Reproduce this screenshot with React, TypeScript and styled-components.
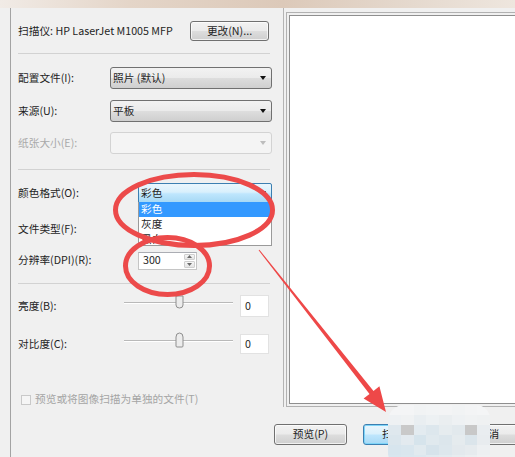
import React from "react";
import styled, { createGlobalStyle, css } from "styled-components";

const GlobalStyle = createGlobalStyle`
  html, body { margin: 0; padding: 0; }
  body {
    width: 515px;
    height: 457px;
    overflow: hidden;
    background: #f0f0f0;
    font-family: "Noto Sans CJK SC", "Noto Sans", sans-serif;
    font-size: 10.7px;
    color: #1e1e1e;
  }
`;

const Window = styled.div`
  position: relative;
  width: 515px;
  height: 457px;
  overflow: hidden;
  display: flex;
  flex-direction: column;
`;

const TitleStrip = styled.div`
  height: 8px;
  flex: none;
  background: linear-gradient(90deg, #f1ebe6 0%, #e4d5c8 25%, #dcc9b9 55%, #e5d9ce 80%, #eee6de 100%);
`;

const Frame = styled.div`
  flex: 1;
  margin-left: 10px;
  border-left: 1px solid #a3a3a3;
  display: flex;
  flex-direction: column;
  min-height: 0;
`;

const TopArea = styled.div`
  height: 399px;
  flex: none;
  display: flex;
`;

const LeftPanel = styled.div`
  width: 272px;
  flex: none;
  box-sizing: border-box;
  padding: 0 11px 0 7px;
  display: flex;
  flex-direction: column;
`;

const Row = styled.div<{ $mt: number; $h: number }>`
  display: flex;
  align-items: center;
  margin-top: ${(p) => p.$mt}px;
  height: ${(p) => p.$h}px;
  flex: none;
  line-height: 1;
  white-space: nowrap;
`;

const Label = styled.span<{ $disabled?: boolean }>`
  width: 92px;
  flex: none;
  color: ${(p) => (p.$disabled ? "#a9a9a9" : "#1e1e1e")};
`;

const ScannerName = styled.span`
  flex: 1;
`;

const Separator = styled.div<{ $mt: number }>`
  margin-top: ${(p) => p.$mt}px;
  height: 1px;
  flex: none;
  background: #d2d2d2;
  margin-right: 2px;
`;

const buttonLook = css`
  box-sizing: border-box;
  border: 1px solid #707070;
  border-radius: 3px;
  background: linear-gradient(#f2f2f2 0%, #ebebeb 48%, #dddddd 52%, #cfcfcf 100%);
  box-shadow: inset 0 0 0 1px rgba(255, 255, 255, 0.7);
  display: flex;
  align-items: center;
  justify-content: center;
  color: #1e1e1e;
  line-height: 1;
`;

const PushButton = styled.div<{ $w: number; $default?: boolean }>`
  ${buttonLook}
  width: ${(p) => p.$w}px;
  height: 100%;
  flex: none;
  ${(p) =>
    p.$default &&
    css`
      border-color: #3c7fb1;
      background: linear-gradient(#eaf6fd 0%, #d9f0fc 48%, #bee6fd 52%, #a7d9f5 100%);
      box-shadow: inset 0 0 0 1px #7fd5f8;
    `}
`;

const Combo = styled.div<{ $variant?: "normal" | "disabled" | "open"; $indent?: number }>`
  position: relative;
  flex: 1;
  height: 100%;
  box-sizing: border-box;
  margin-left: ${(p) => p.$indent ?? 0}px;
  border: 1px solid #707070;
  border-radius: 3px;
  background: linear-gradient(#f2f2f2 0%, #ebebeb 48%, #dddddd 52%, #cfcfcf 100%);
  display: flex;
  align-items: center;
  padding-left: 2px;
  ${(p) =>
    p.$variant === "disabled" &&
    css`
      border-color: #d3d3d3;
      background: #f4f4f4;
    `}
  ${(p) =>
    p.$variant === "open" &&
    css`
      border-color: #3c7fb1;
      border-radius: 2px 2px 0 0;
      background: linear-gradient(#eaf6fd 0%, #d9f0fc 45%, #bee6fd 55%, #a7d9f5 100%);
    `}
`;

const ComboArrow = styled.span<{ $disabled?: boolean }>`
  margin-left: auto;
  margin-right: 5px;
  width: 0;
  height: 0;
  border-left: 3.5px solid transparent;
  border-right: 3.5px solid transparent;
  border-top: 4px solid ${(p) => (p.$disabled ? "#bdbdbd" : "#111")};
`;

const DropList = styled.div`
  position: absolute;
  top: 100%;
  left: -1px;
  right: -1px;
  height: 44px;
  box-sizing: border-box;
  border: 1px solid #9a9a9a;
  border-top: none;
  background: #fff;
  overflow: hidden;
  z-index: 2;
`;

const DropItem = styled.div<{ $selected?: boolean }>`
  height: 15px;
  display: flex;
  align-items: center;
  padding-left: 2px;
  background: ${(p) => (p.$selected ? "#3399ff" : "transparent")};
  color: ${(p) => (p.$selected ? "#fff" : "#1e1e1e")};
`;

const SpinBox = styled.div`
  margin-left: 28px;
  width: 59px;
  height: 18px;
  box-sizing: border-box;
  border: 1px solid #c5c5c5;
  border-top-color: #abadb3;
  background: #fff;
  display: flex;
  align-items: stretch;
`;

const SpinValue = styled.span`
  flex: 1;
  display: flex;
  align-items: center;
  padding-left: 4px;
`;

const SpinButtons = styled.div`
  width: 11px;
  display: flex;
  flex-direction: column;
  gap: 1px;
  padding: 1px 1px 1px 0;
`;

const SpinHalf = styled.div`
  flex: 1;
  border: 1px solid #cfcfcf;
  border-radius: 1px;
  background: linear-gradient(#f6f6f6, #e4e4e4);
  display: flex;
  align-items: center;
  justify-content: center;
`;

const Slider = styled.div<{ $offset: number }>`
  position: relative;
  margin-left: 14px;
  width: 109px;
  height: 16px;
  align-self: flex-start;
  margin-top: ${(p) => p.$offset}px;
`;

const Track = styled.div`
  position: absolute;
  left: 0;
  right: 0;
  top: 7px;
  height: 1px;
  background: #b9b9b9;
  border-bottom: 1px solid #ffffff;
`;

const Thumb = styled.svg`
  position: absolute;
  top: 0;
`;

const ValueBox = styled.div`
  margin-left: 7px;
  width: 29px;
  height: 100%;
  box-sizing: border-box;
  border: 1px solid #e2e2e2;
  background: #fff;
  display: flex;
  align-items: center;
  padding-left: 4px;
`;

const CheckBox = styled.span`
  margin-left: 3px;
  width: 10px;
  height: 10px;
  box-sizing: border-box;
  border: 1px solid #c9c9c9;
  background: #f5f5f5;
  flex: none;
`;

const CheckLabel = styled.span`
  margin-left: 4px;
  color: #a5a5a5;
`;

const RightPanel = styled.div`
  flex: 1;
  display: flex;
  flex-direction: column;
  border-left: 1px solid #b4b4b4;
  padding-top: 4px;
  min-width: 0;
`;

const PreviewOuter = styled.div`
  margin-left: 2px;
  flex: 1;
  box-sizing: border-box;
  border: 1px solid #b1b1b1;
  border-right: none;
  padding: 2px 0 2px 2px;
`;

const PreviewInner = styled.div`
  height: 100%;
  box-sizing: border-box;
  border: 1px solid #8f8f8f;
  border-right: none;
  background: #fff;
`;

const ButtonRow = styled.div`
  margin-top: 17px;
  height: 21px;
  flex: none;
  display: flex;
  gap: 16px;
  padding-left: 263px;
`;

const Overlay = styled.svg`
  position: absolute;
  left: 0;
  top: 0;
  pointer-events: none;
  z-index: 5;
`;

const Blur = styled.div`
  position: absolute;
  left: 388px;
  top: 405px;
  width: 102px;
  height: 60px;
  border-radius: 16px 14px 0 12px;
  overflow: hidden;
  display: grid;
  grid-template-columns: repeat(8, 1fr);
  grid-template-rows: repeat(6, 1fr);
  z-index: 6;
`;

const BlurCell = styled.div<{ $c: string }>`
  background: ${(p) => p.$c};
`;

const blurColors = [
  "#f4f5f6", "#f4f5f6", "#f1f3f4", "#f2f4f5", "#f3f4f5", "#f1f3f4", "#f3f4f5", "#f4f5f6",
  "#eef1f3", "#f0f2f3", "#e9eef1", "#edf1f3", "#eaeef0", "#eef1f3", "#f0f2f3", "#eff1f2",
  "#dfe8ee", "#c9c9c9", "#e3ebf0", "#dde7ed", "#e6ecef", "#e2e9ed", "#c8c8c8", "#e9edf0",
  "#dbe6ed", "#e3eaef", "#d6e4ec", "#e0e9ee", "#dce6ec", "#e5ebee", "#dbe5eb", "#e8ecef",
  "#d7e5ee", "#d9e6ee", "#e1eaef", "#d6e3eb", "#dde7ed", "#e3e9ed", "#e6ebee", "#edf0f2",
  "#d8e6ef", "#dae7ef", "#dce8ef", "#e0eaf0", "#e2ebf0", "#e7edf0", "#ebeff1", "#eff1f3",
];

const BrightThumb = () => (
  <Thumb width="9" height="14" viewBox="0 0 9 14" style={{ left: 51 }}>
    <path d="M1 1 H8 V10 Q8 13 4.5 13 Q1 13 1 10 Z" fill="#ececec" stroke="#8e8e8e" />
  </Thumb>
);

const ContrastThumb = () => (
  <Thumb width="9" height="16" viewBox="0 0 9 16" style={{ left: 51, top: -1 }}>
    <path d="M1 5 Q1 1 4.5 1 Q8 1 8 5 V14 Q8 15 7 15 H2 Q1 15 1 14 Z" fill="#ececec" stroke="#8e8e8e" />
  </Thumb>
);

const SpinArrow = ({ up }: { up?: boolean }) => (
  <svg width="5" height="3" viewBox="0 0 5 3">
    <path d={up ? "M0 3 L2.5 0 L5 3 Z" : "M0 0 L5 0 L2.5 3 Z"} fill="#6a6a6a" />
  </svg>
);

export default function App() {
  return (
    <Window>
      <GlobalStyle />
      <TitleStrip />
      <Frame>
        <TopArea>
          <LeftPanel>
            <Row $mt={13} $h={20}>
              <ScannerName>扫描仪: HP LaserJet M1005 MFP</ScannerName>
              <PushButton $w={79} style={{ marginRight: 3 }}>更改(N)...</PushButton>
            </Row>
            <Separator $mt={12} />
            <Row $mt={13} $h={22}>
              <Label>配置文件(I):</Label>
              <Combo>
                照片 (默认)
                <ComboArrow />
              </Combo>
            </Row>
            <Row $mt={11} $h={22}>
              <Label>来源(U):</Label>
              <Combo>
                平板
                <ComboArrow />
              </Combo>
            </Row>
            <Row $mt={10} $h={22}>
              <Label $disabled>纸张大小(E):</Label>
              <Combo $variant="disabled">
                <ComboArrow $disabled />
              </Combo>
            </Row>
            <Separator $mt={15} />
            <Row $mt={13} $h={20}>
              <Label>颜色格式(O):</Label>
              <Combo $variant="open" $indent={28}>
                彩色
                <ComboArrow />
                <DropList>
                  <DropItem $selected>彩色</DropItem>
                  <DropItem>灰度</DropItem>
                  <DropItem>黑白</DropItem>
                </DropList>
              </Combo>
            </Row>
            <Row $mt={16} $h={20}>
              <Label>文件类型(F):</Label>
            </Row>
            <Row $mt={12} $h={19}>
              <Label>分辨率(DPI)(R):</Label>
              <SpinBox>
                <SpinValue>300</SpinValue>
                <SpinButtons>
                  <SpinHalf>
                    <SpinArrow up />
                  </SpinHalf>
                  <SpinHalf>
                    <SpinArrow />
                  </SpinHalf>
                </SpinButtons>
              </SpinBox>
            </Row>
            <Separator $mt={13} />
            <Row $mt={11} $h={22}>
              <Label>亮度(B):</Label>
              <Slider $offset={0}>
                <Track />
                <BrightThumb />
              </Slider>
              <ValueBox>0</ValueBox>
            </Row>
            <Row $mt={17} $h={20}>
              <Label>对比度(C):</Label>
              <Slider $offset={-1}>
                <Track />
                <ContrastThumb />
              </Slider>
              <ValueBox>0</ValueBox>
            </Row>
            <Row $mt={39} $h={13}>
              <CheckBox />
              <CheckLabel>预览或将图像扫描为单独的文件(T)</CheckLabel>
            </Row>
          </LeftPanel>
          <RightPanel>
            <PreviewOuter>
              <PreviewInner />
            </PreviewOuter>
          </RightPanel>
        </TopArea>
        <ButtonRow>
          <PushButton $w={73}>预览(P)</PushButton>
          <PushButton $w={73} $default>扫描(S)</PushButton>
          <PushButton $w={73}>取消</PushButton>
        </ButtonRow>
      </Frame>
      <Overlay width="515" height="457" viewBox="0 0 515 457">
        <ellipse cx="194" cy="210" rx="78.5" ry="35.5" fill="none" stroke="#ec4a4a" strokeWidth="5" />
        <ellipse cx="167.5" cy="266" rx="42" ry="28.5" fill="none" stroke="#ec4a4a" strokeWidth="5" />
        <polygon
          points="258.6,250.3 259.4,249.7 373.5,390.9 379.4,386.2 386,412 363.6,398.6 369.5,394"
          fill="#ee4848"
        />
      </Overlay>
      <Blur>
        {blurColors.map((c, i) => (
          <BlurCell key={i} $c={c} />
        ))}
      </Blur>
    </Window>
  );
}
